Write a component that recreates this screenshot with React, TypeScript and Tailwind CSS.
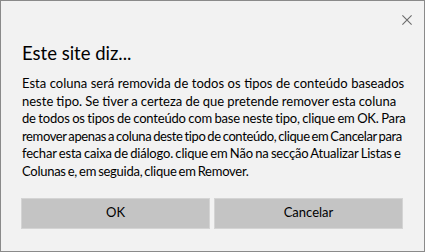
// each line carries its own spacing so the wrap matches the original dialog
const lines = [
  { text: 'Esta coluna será removida de todos os tipos de conteúdo baseados', cls: '[word-spacing:0.2px]' },
  { text: 'neste tipo. Se tiver a certeza de que pretende remover esta coluna', cls: '[word-spacing:-0.2px]' },
  { text: 'de todos os tipos de conteúdo com base neste tipo, clique em OK. Para', cls: 'tracking-[-0.19px] [word-spacing:-0.6px]' },
  { text: 'remover apenas a coluna deste tipo de conteúdo, clique em Cancelar para', cls: 'tracking-[-0.38px] [word-spacing:-1px]' },
  { text: 'fechar esta caixa de diálogo. clique em Não na secção Atualizar Listas e', cls: 'tracking-[-0.19px] [word-spacing:-0.8px]' },
  { text: 'Colunas e, em seguida, clique em Remover.', cls: 'tracking-[-0.27px] [word-spacing:-1px]' },
]

export default function App() {
  return (
    <div className="flex h-[252px] w-[425px] flex-col border border-[#8a8a8a] bg-[#f2f2f2] font-['Lato','Noto_Sans',sans-serif] text-black">
      <div className="flex justify-end pr-[12px] pt-[14px]">
        <button aria-label="Fechar" className="flex h-[10px] w-[10px] items-center justify-center">
          <svg width="10" height="10" viewBox="0 0 10 10" fill="none" stroke="#6b6b6b" strokeWidth="1.1">
            <path d="M0.4 0.4L9.6 9.6M9.6 0.4L0.4 9.6" />
          </svg>
        </button>
      </div>
      <h1 className="mt-[16px] pl-[21px] text-[18.5px] leading-[24px]">Este site diz...</h1>
      <div className="mt-[10px] pl-[21px] text-[13px] leading-[17.6px]">
        {lines.map((l) => (
          <p key={l.text} className={`whitespace-nowrap ${l.cls}`}>
            {l.text}
          </p>
        ))}
      </div>
      <div className="mt-[17px] flex gap-[4px] pl-[20px] pr-[21px]">
        <button className="h-[31px] flex-1 border border-[#d4d4d4] bg-[#c4c4c4] text-[13px] text-black">OK</button>
        <button className="h-[31px] flex-1 border border-[#d4d4d4] bg-[#c4c4c4] text-[13px] text-black">Cancelar</button>
      </div>
    </div>
  )
}
